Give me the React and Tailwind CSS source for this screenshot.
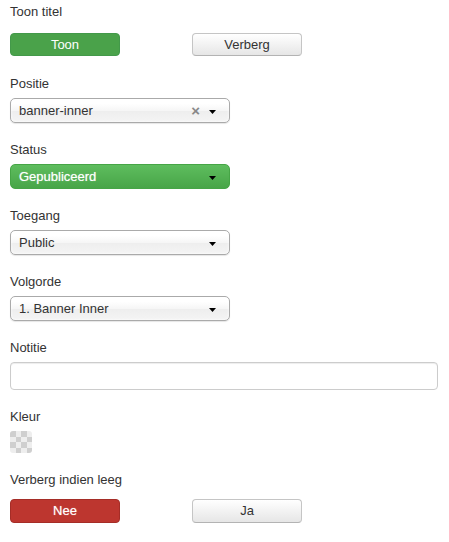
import React from "react";

const font = { fontFamily: '"Liberation Sans", Arial, sans-serif' };

function Caret({ className = "" }) {
  return (
    <svg width="7" height="4" viewBox="0 0 7 4" className={className}>
      <path d="M0 0 L7 0 L3.5 4 Z" fill="#000" />
    </svg>
  );
}

function Label({ children }) {
  return <div className="h-[18px] text-[13px] leading-[18px] text-[#333]">{children}</div>;
}

function Select({ text, clear = false }) {
  return (
    <div className="flex h-[25px] w-[220px] items-center rounded-[5px] border border-[#aaa] bg-[linear-gradient(#ffffff_20%,#f6f6f6_50%,#eeeeee_52%,#f4f4f4_100%)] pl-[8px] pr-[13px] text-[13px] text-[#333] shadow-[inset_0_0_3px_#fff,0_1px_1px_rgba(0,0,0,0.1)]">
      <span className="flex-1">{text}</span>
      {clear && <span className="mr-[9px] text-[15px] font-bold leading-none text-[#888]">×</span>}
      <Caret className="mt-[3px]" />
    </div>
  );
}

export default function App() {
  const checker = [];
  for (let r = 0; r < 4; r++) {
    for (let c = 0; c < 4; c++) {
      checker.push((r + c) % 2 === 0);
    }
  }
  return (
    <div className="min-h-[542px] w-[449px] bg-white pl-[10px] pt-[3px]" style={font}>
      <Label>Toon titel</Label>
      <div className="mt-[12px] flex">
        <div className="flex h-[23px] w-[110px] items-center justify-center rounded-[4px] border border-[#43994a] bg-[#4aa24a] text-[13px] text-white">
          Toon
        </div>
        <div className="ml-[72px] flex h-[23px] w-[110px] items-center justify-center rounded-[4px] border border-[#c5c5c5] border-b-[#b3b3b3] bg-[linear-gradient(#ffffff,#e6e6e6)] text-[13px] text-[#333]">
          Verberg
        </div>
      </div>

      <div className="mt-[19px]">
        <Label>Positie</Label>
        <div className="mt-[5px]">
          <Select text="banner-inner" clear />
        </div>
      </div>

      <div className="mt-[18px]">
        <Label>Status</Label>
        <div className="mt-[5px] flex h-[25px] w-[220px] items-center rounded-[5px] border border-[#46a546] bg-[linear-gradient(#5ebd5e,#48a548)] pl-[8px] pr-[13px] text-[13px] text-white [text-shadow:0_0_1px_rgba(255,255,255,0.6)]">
          <span className="flex-1">Gepubliceerd</span>
          <Caret className="mt-[3px]" />
        </div>
      </div>

      <div className="mt-[18px]">
        <Label>Toegang</Label>
        <div className="mt-[5px]">
          <Select text="Public" />
        </div>
      </div>

      <div className="mt-[18px]">
        <Label>Volgorde</Label>
        <div className="mt-[5px]">
          <Select text="1. Banner Inner" />
        </div>
      </div>

      <div className="mt-[18px]">
        <Label>Notitie</Label>
        <div className="mt-[5px] h-[28px] w-[428px] rounded-[4px] border border-[#ccc] bg-white shadow-[inset_0_1px_1px_rgba(0,0,0,0.075)]" />
      </div>

      <div className="mt-[18px]">
        <Label>Kleur</Label>
        <div className="mt-[5px] grid h-[22px] w-[22px] grid-cols-4 grid-rows-4 overflow-hidden rounded-[3px]">
          {checker.map((dark, i) => (
            <div key={i} className={dark ? "bg-[#cfcfcf]" : "bg-[#eeeeee]"} />
          ))}
        </div>
      </div>

      <div className="mt-[18px]">
        <Label>Verberg indien leeg</Label>
        <div className="mt-[10px] flex">
          <div className="flex h-[24px] w-[110px] items-center justify-center rounded-[4px] border border-[#a52d27] bg-[#bd362f] text-[13px] text-white [text-shadow:0_0_1px_rgba(255,255,255,0.6)]">
            Nee
          </div>
          <div className="ml-[72px] flex h-[24px] w-[110px] items-center justify-center rounded-[4px] border border-[#c5c5c5] border-b-[#b3b3b3] bg-[linear-gradient(#ffffff,#e6e6e6)] text-[13px] text-[#333]">
            Ja
          </div>
        </div>
      </div>
    </div>
  );
}
